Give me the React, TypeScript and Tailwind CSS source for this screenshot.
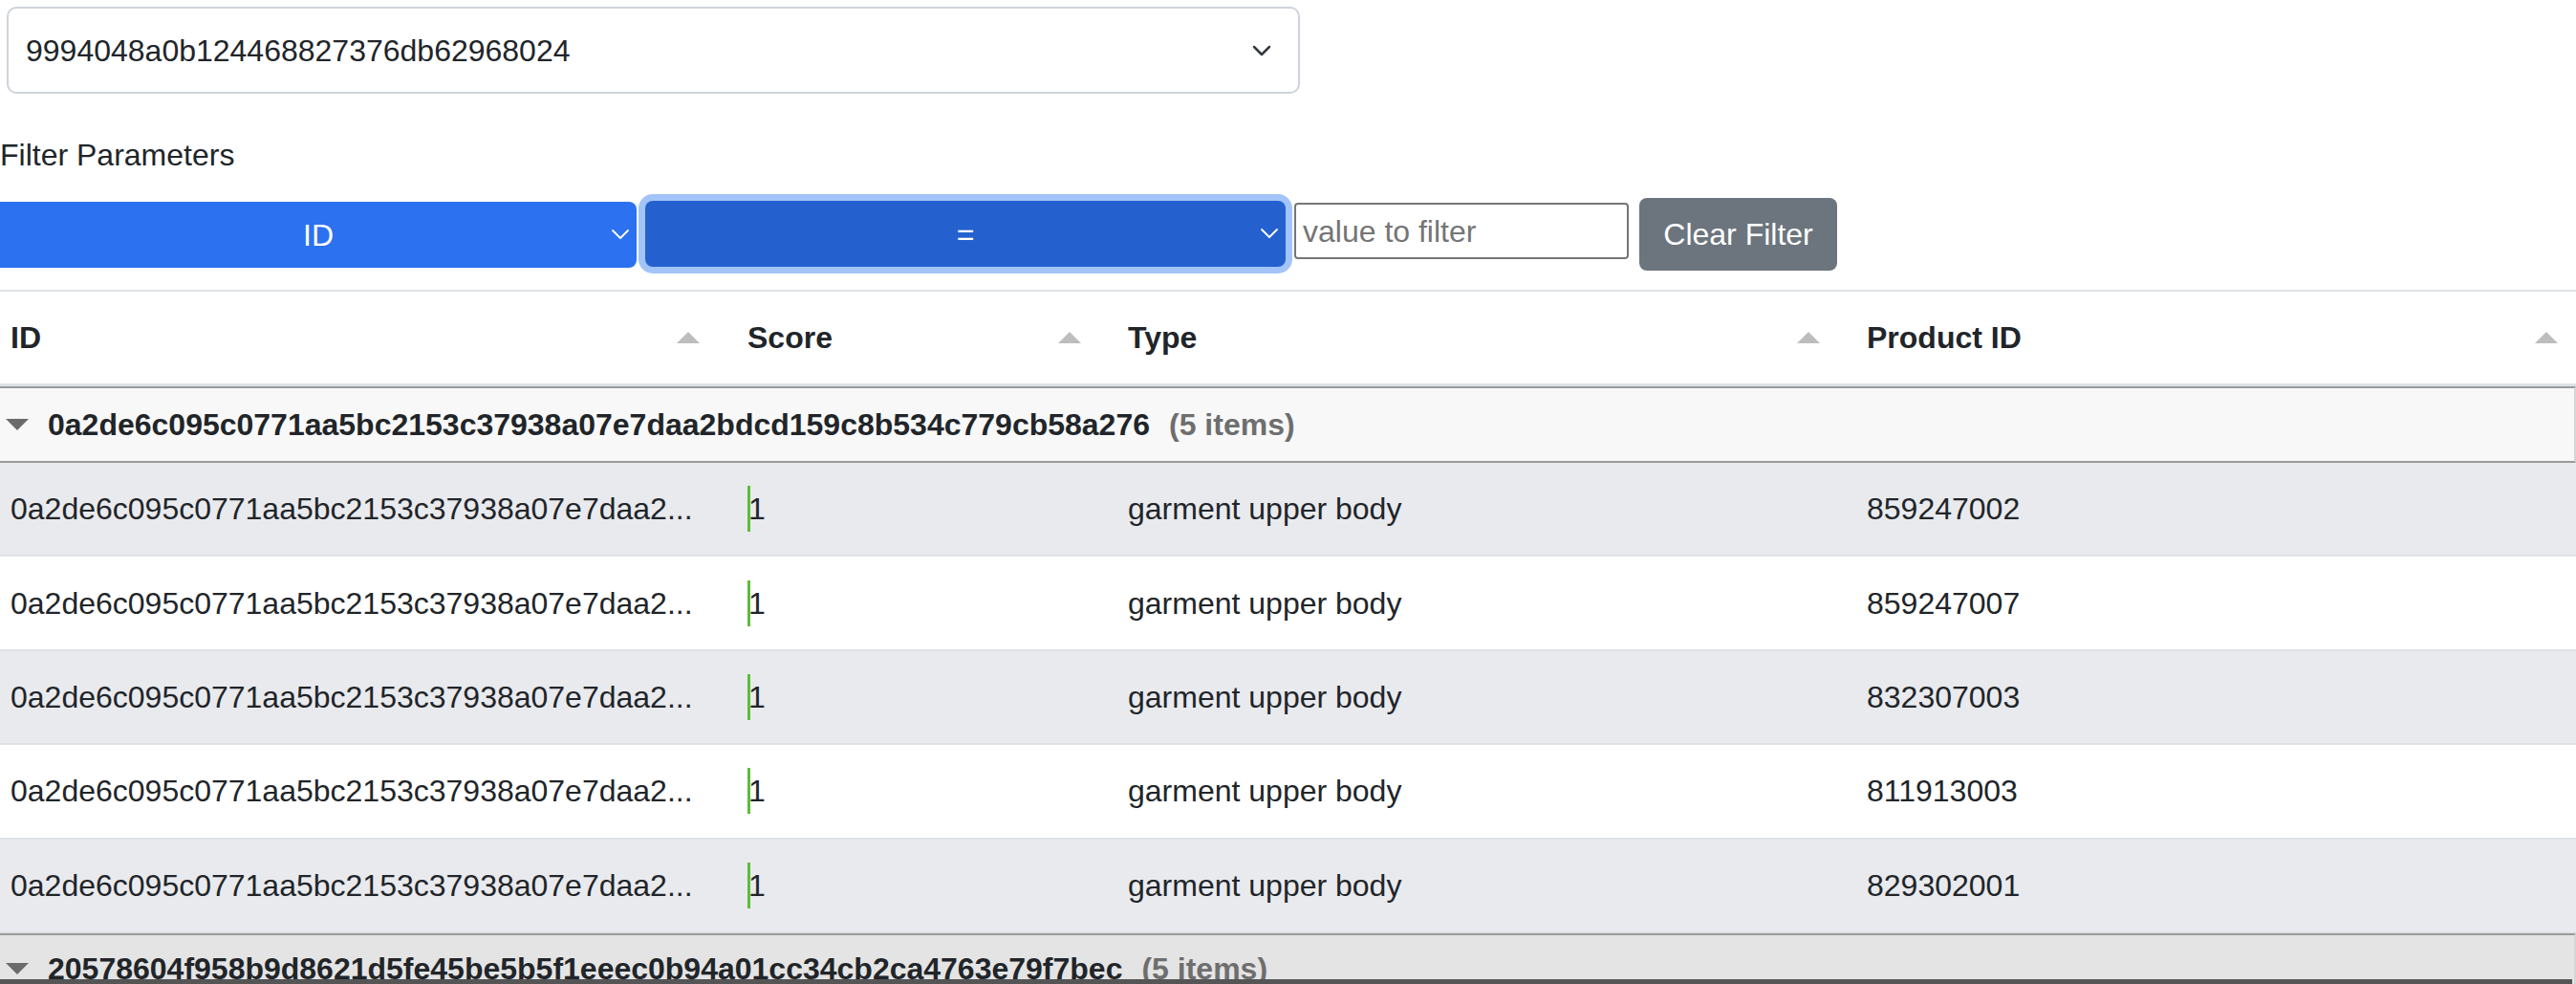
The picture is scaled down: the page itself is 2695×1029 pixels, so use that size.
import React from 'react';

type Item = { id: string; score: number; type: string; productId: string };
type Group = { key: string; items: Item[] };

const GROUP_A = '0a2de6c095c0771aa5bc2153c37938a07e7daa2bdcd159c8b534c779cb58a276';
const GROUP_B = '20578604f958b9d8621d5fe45be5b5f1eeec0b94a01cc34cb2ca4763e79f7bec';

const groups: Group[] = [
  {
    key: GROUP_A,
    items: ['859247002', '859247007', '832307003', '811913003', '829302001'].map((p) => ({
      id: GROUP_A,
      score: 1,
      type: 'garment upper body',
      productId: p,
    })),
  },
  { key: GROUP_B, items: [] },
];

const short = (s: string) => s.slice(0, 39) + '...';

function Chevron({ color, stroke = 2 }: { color: string; stroke?: number }) {
  return (
    <svg width="20" height="12" viewBox="0 0 20 12" fill="none">
      <path d="M2 2 L10 10 L18 2" stroke={color} strokeWidth={stroke} strokeLinecap="round" strokeLinejoin="round" />
    </svg>
  );
}

function SortArrow() {
  return (
    <svg width="24" height="12" viewBox="0 0 24 12">
      <polygon points="12,0 24,12 0,12" fill="#bdbdbd" />
    </svg>
  );
}

function Caret() {
  return (
    <svg width="24" height="12" viewBox="0 0 24 12">
      <polygon points="0,0 24,0 12,12" fill="#6b6b6b" />
    </svg>
  );
}

const cols = [
  { label: 'ID', w: 'w-[771px]', pr: 'pr-[39px]' },
  { label: 'Score', w: 'w-[398px]', pr: 'pr-[38px]' },
  { label: 'Type', w: 'w-[773px]', pr: 'pr-[38px]' },
  { label: 'Product ID', w: 'w-[753px]', pr: 'pr-[19px]' },
];

export default function App() {
  return (
    <div className="relative w-[2695px] h-[1029px] overflow-hidden bg-white text-[#212529] font-['Liberation_Sans',Arial,sans-serif]">
      {/* dataset select */}
      <div className="ml-[7px] mt-[7px] w-[1353px] h-[91px] border-2 border-[#ced4da] rounded-[10px] flex items-center justify-between pl-[18px] pr-[28px] text-[32px]">
        <span>9994048a0b124468827376db62968024</span>
        <Chevron color="#343a40" stroke={2.5} />
      </div>

      <div className="mt-[40px] text-[32px] leading-[48px]">Filter Parameters</div>

      {/* filter row */}
      <div className="mt-[17px] flex items-start text-[32px]">
        <div className="mt-[8px] w-[666px] h-[69px] rounded-r-[8px] bg-[#2c71f0] text-white flex items-center relative">
          <span className="flex-1 text-center">ID</span>
          <span className="absolute right-[7px] top-[28px]">
            <Chevron color="#ffffff" stroke={1.8} />
          </span>
        </div>
        <div className="ml-[2px] p-[7px] rounded-[15px] bg-[#a2c4f8]">
          <div className="w-[670px] h-[69px] rounded-[8px] bg-[#2461cf] text-white flex items-center relative">
            <span className="flex-1 text-center">=</span>
            <span className="absolute right-[7px] top-[28px]">
              <Chevron color="#ffffff" stroke={1.8} />
            </span>
          </div>
        </div>
        <div className="ml-[2px] mt-[9px] w-[350px] h-[59px] border-2 border-[#767676] rounded-[4px] flex items-center pl-[7px] text-[#757575]">
          value to filter
        </div>
        <button className="ml-[11px] mt-[4px] w-[207px] h-[76px] rounded-[8px] bg-[#6c757d] text-white text-[32px]">
          Clear Filter
        </button>
      </div>

      <div className="mt-[17px] h-[2px] bg-[#dee2e6]" />

      {/* header */}
      <div className="flex h-[99px] border-b-[3px] border-[#dee2e6] text-[32px] font-bold">
        {cols.map((c) => (
          <div key={c.label} className={`${c.w} ${c.pr} pl-[11px] flex items-center justify-between`}>
            <span>{c.label}</span>
            <SortArrow />
          </div>
        ))}
      </div>

      {groups.map((g, gi) => (
        <div key={g.key}>
          <div
            className={`flex items-center gap-[20px] h-[80px] border-t-2 border-b-2 border-[#9a9a9a] border-r-2 border-r-[#d6d6d6] pl-[6px] text-[32px] font-bold ${
              gi === 0 ? 'bg-[#f8f8f8]' : 'bg-[#e4e4e4] pb-[6px]'
            }`}
          >
            <Caret />
            <span>
              {g.key}
              <span className="ml-[20px] text-[#6e6e6e]">({g.items.length || 5} items)</span>
            </span>
          </div>
          {g.items.map((it, i) => (
            <div
              key={it.productId}
              className={`flex h-[98.4px] border-b-2 border-[#dee2e6] text-[32px] ${
                i % 2 === 0 ? 'bg-[#e9eaee]' : 'bg-white'
              }`}
            >
              <div className="w-[771px] pl-[11px] flex items-center whitespace-nowrap">{short(it.id)}</div>
              <div className="w-[398px] pl-[11px] flex items-center">
                <span className="h-[48px] border-l-[3px] border-[#5cbd3a] flex items-center leading-none">
                  <span className="-ml-[2px]">{it.score}</span>
                </span>
              </div>
              <div className="w-[773px] pl-[11px] flex items-center">{it.type}</div>
              <div className="w-[753px] pl-[11px] flex items-center">{it.productId}</div>
            </div>
          ))}
        </div>
      ))}

      {/* overlay strip at bottom edge */}
      <div className="absolute left-0 bottom-0 w-[2691px] h-[5px] bg-[#555555]" />
    </div>
  );
}
